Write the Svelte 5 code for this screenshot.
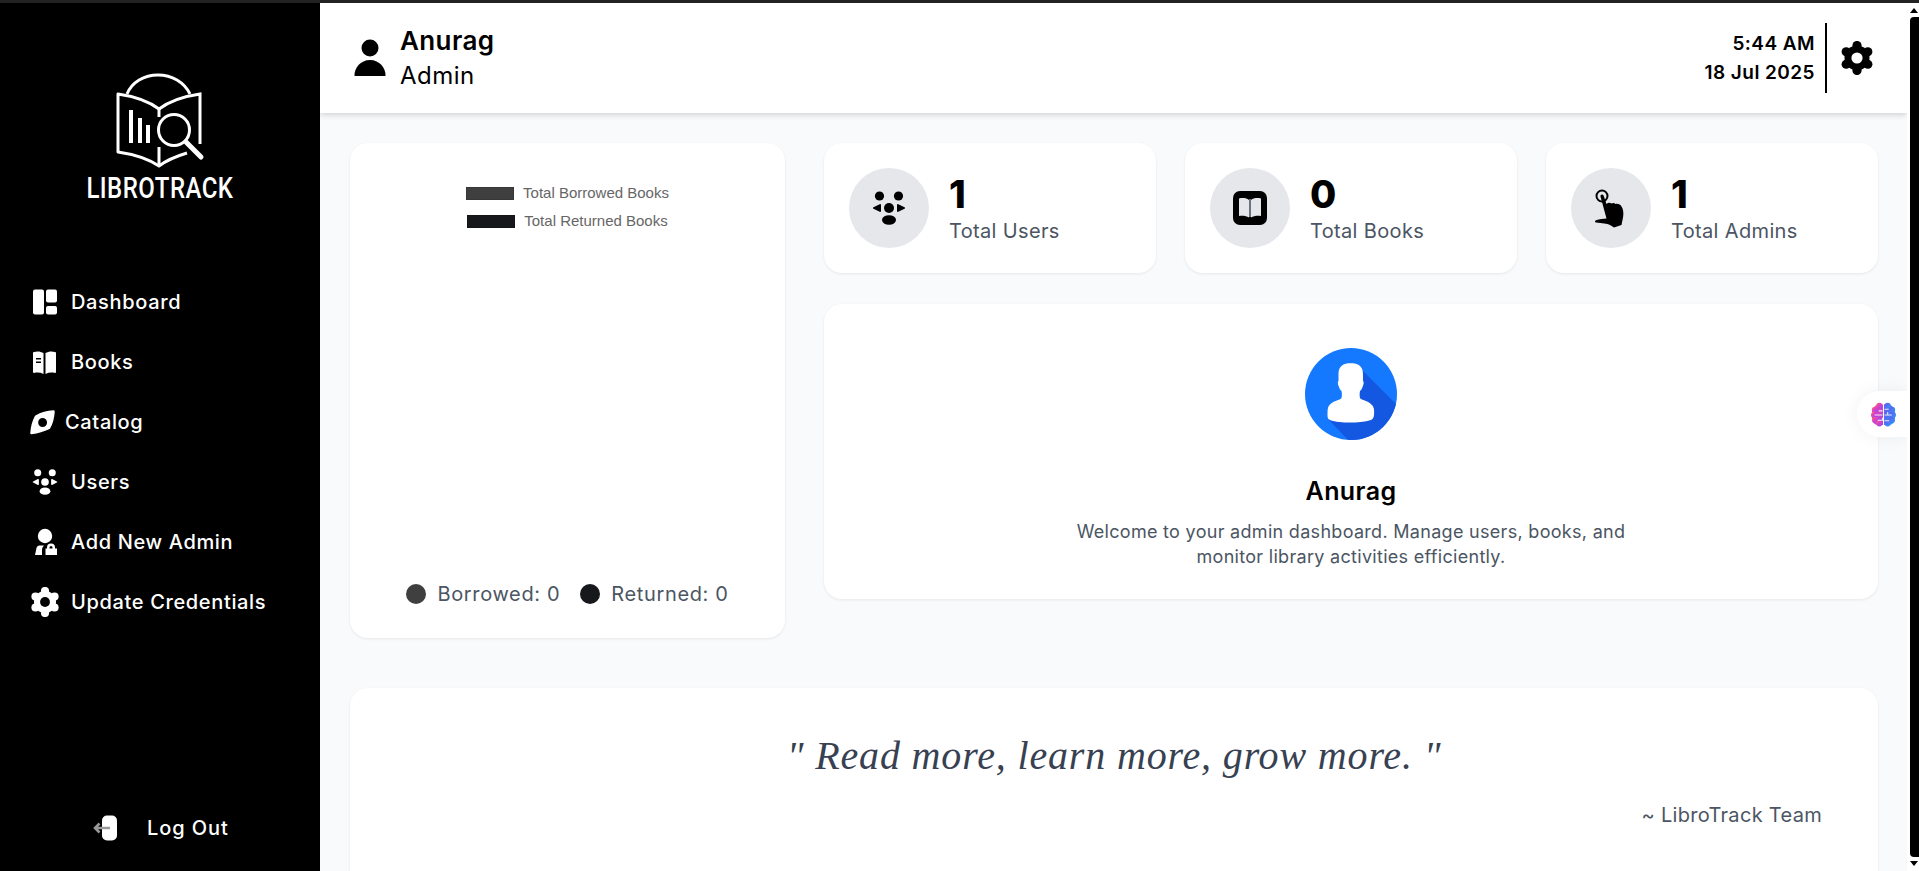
<script lang="ts">
	const navItems = [
		{ label: 'Dashboard', icon: 'dashboard' },
		{ label: 'Books', icon: 'books' },
		{ label: 'Catalog', icon: 'catalog' },
		{ label: 'Users', icon: 'users' },
		{ label: 'Add New Admin', icon: 'admin' },
		{ label: 'Update Credentials', icon: 'gear' }
	];

	const stats = [
		{ value: 1, label: 'Total Users', icon: 'users' },
		{ value: 0, label: 'Total Books', icon: 'book' },
		{ value: 1, label: 'Total Admins', icon: 'hand' }
	];

	const lobes = [0, 60, 120, 180, 240, 300];
</script>

{#snippet gear(size: number, hole: string)}
	<svg width={size} height={size} viewBox="0 0 34 34" fill="currentColor">
		{#each lobes as a}
			<circle cx={17 + 12.5 * Math.cos(((a + 30) * Math.PI) / 180)} cy={17 + 12.5 * Math.sin(((a + 30) * Math.PI) / 180)} r="4.6" />
		{/each}
		<circle cx="17" cy="17" r="12.5" />
		<circle cx="17" cy="17" r="5.6" fill={hole} />
	</svg>
{/snippet}

{#snippet people(size: number)}
	<svg width={size} height={size} viewBox="0 0 34 34" fill="currentColor">
		<circle cx="7.500" cy="5" r="4.600" />
		<circle cx="26.500" cy="5" r="4.600" />
		<circle cx="17" cy="17" r="5" />
		<path d="M9 14v6c0 .8-.6 1.100-1.300.8L1.500 17.800c-.7-.4-.7-1.200 0-1.600l6.200-3c.7-.3 1.300 0 1.300.8zM25 14v6c0 .8.6 1.100 1.300.8l6.200-3c.7-.4.7-1.200 0-1.600l-6.200-3c-.7-.3-1.300 0-1.300.8z" />
		<ellipse cx="17" cy="29" rx="7" ry="4.800" />
	</svg>
{/snippet}

{#snippet navIcon(name: string)}
	{#if name === 'dashboard'}
		<svg width="30" height="30" viewBox="0 0 30 30" fill="currentColor">
			<rect x="3" y="2.500" width="11" height="25" rx="2" />
			<rect x="16" y="2.500" width="11" height="13" rx="2" />
			<rect x="16" y="19" width="11" height="8.500" rx="2" />
		</svg>
	{:else if name === 'books'}
		<svg width="30" height="30" viewBox="0 0 30 30" fill="currentColor">
			<path d="M4 5c3-1 6.500-.8 9.500 1v21c-3-1.500-6-1.800-9.500-1a1 1 0 0 1-1-1V6a1 1 0 0 1 1-1z" />
			<path d="M15.500 6c3-1.800 6.500-2 9.500-1a1 1 0 0 1 1 1v19a1 1 0 0 1-1 1c-3.500-.8-6.500-.5-9.500 1z" />
			<rect x="6" y="11" width="5" height="1.500" fill="#000" />
			<rect x="6" y="14.500" width="5" height="1.500" fill="#000" />
		</svg>
	{:else if name === 'catalog'}
		<svg class="narrow" width="25" height="30" viewBox="0 0 25 30" fill="currentColor">
			<path fill-rule="evenodd" stroke="currentColor" stroke-width="2.500" stroke-linejoin="round" d="M6 9.500Q14 5 23.500 4.500 23 14 19 21 11 25 1.500 26 2 17 6 9.500zM12.600 9.800a5.700 5.700 0 1 0 0 11.400 5.700 5.700 0 0 0 0-11.400z" />
		</svg>
	{:else if name === 'users'}
		<span class="icon-box">{@render people(26)}</span>
	{:else if name === 'admin'}
		<svg width="30" height="30" viewBox="0 0 30 30" fill="currentColor">
			<circle cx="15" cy="9" r="7.200" />
			<path d="M5 28l1.500-7c.5-2 2-2.500 4-2.500h3.500c-1.500 1.500-2 3-2 5V28z" />
			<path fill-rule="evenodd" d="M15.500 28v-6.500h1.500v-1a4 4 0 0 1 8 0v1h2V28zM19.500 20.500v1h3v-1a1.500 1.500 0 0 0-3 0z" />
		</svg>
	{:else}
		{@render gear(30, '#000')}
	{/if}
{/snippet}

{#snippet statIcon(name: string)}
	{#if name === 'users'}
		{@render people(34)}
	{:else if name === 'book'}
		<svg width="34" height="34" viewBox="0 0 34 34">
			<rect x="0" y="0" width="34" height="34" rx="7" fill="#000" />
			<path d="M6 7.500c4-.8 7.500-.5 10 1.500v17.500c-2.500-1.500-6-2-10-1.500zM28 7.500c-4-.8-7.500-.5-10 1.500v17.500c2.500-1.500 6-2 10-1.500z" fill="#e5e7eb" />
			<rect x="16" y="8" width="2" height="18" fill="#6b7280" />
		</svg>
	{:else}
		<svg width="34" height="41" viewBox="0 0 34 41" fill="currentColor">
			<circle cx="8" cy="8" r="5.500" fill="none" stroke="currentColor" stroke-width="2" />
			<path d="M6.500 8.500c-.5-2 2.300-3 3.100-1L12.500 16c1.500-1.500 3.500-1.500 5-.5 1.500-1 3-.5 4 .5 2.500-.5 5 .5 6 2.500 2 3 2.500 8 1 13.500l-1 5-7.500 2.500-4-2.500c-3-1.500-8-1.500-14-2.500-1.300-.3-1.300-1.800 0-2.300 3.500-1.200 7-1.400 10.500-1.700z" />
		</svg>
	{/if}
{/snippet}

<div class="window">
	<div class="chrome"></div>
	<div class="shell">
		<aside class="sidebar">
			<div class="brand">
				<svg width="90" height="96" viewBox="0 0 90 96" fill="none" stroke="#fff" stroke-width="3">
					<path d="M12 21C17 9 29 2 43 2s26 7 32 19" />
					<path d="M44 36C32 27 17 23 3 21v58c14 2 29 6 41 14 8-6 18-10 28-13" stroke-linejoin="round" />
					<path d="M44 36c12-9 27-13 41-15v50" />
					<path d="M44 36v8M44 74v19" />
					<circle cx="59" cy="57" r="15.500" />
					<path d="M71 69l15 15" stroke-width="5" stroke-linecap="round" />
					<path d="M16 37v33M25 45v25M33 52v18" stroke-width="4" />
				</svg>
				<span class="wordmark">LIBROTRACK</span>
			</div>
			<nav class="nav">
				{#each navItems as item}
					<div class="nav-item" class:tight={item.icon === 'catalog'}>
						{@render navIcon(item.icon)}
						<span>{item.label}</span>
					</div>
				{/each}
			</nav>
			<div class="logout">
				<svg width="26" height="26" viewBox="0 0 26 26">
					<rect x="10" y="0.500" width="15" height="25" rx="5" fill="#fff" />
					<path d="M18 13H3M7.500 8.500L3 13l4.500 4.500" fill="none" stroke="#999" stroke-width="2.500" />
				</svg>
				<span>Log Out</span>
			</div>
		</aside>

		<main class="main">
			<header class="topbar">
				<div class="who">
					<svg width="36" height="38" viewBox="0 0 36 38" fill="#000">
						<circle cx="18" cy="9" r="8.500" />
						<path d="M2.500 37c-.5-8 6-16 15.500-16s16 8 15.500 16z" />
					</svg>
					<div>
						<div class="who-name">Anurag</div>
						<div class="who-role">Admin</div>
					</div>
				</div>
				<div class="clock">
					<div class="clock-text">
						<div>5:44 AM</div>
						<div>18 Jul 2025</div>
					</div>
					<div class="divider"></div>
					{@render gear(34, '#fff')}
				</div>
			</header>

			<div class="content">
				<div class="top-grid">
					<section class="card chart-card">
						<div class="chart-legend">
							<div class="legend-row"><i class="swatch borrowed"></i><span>Total Borrowed Books</span></div>
							<div class="legend-row"><i class="swatch returned"></i><span>Total Returned Books</span></div>
						</div>
						<div class="counts">
							<i class="dot borrowed"></i><span>Borrowed: 0</span>
							<i class="dot returned"></i><span>Returned: 0</span>
						</div>
					</section>

					<div class="right-col">
						<div class="stats">
							{#each stats as s}
								<div class="card stat">
									<div class="circle">{@render statIcon(s.icon)}</div>
									<div class="stat-text">
										<div class="stat-value">{s.value}</div>
										<div class="stat-label">{s.label}</div>
									</div>
								</div>
							{/each}
						</div>
						<section class="card welcome">
							<svg width="92" height="92" viewBox="0 0 92 92">
								<defs>
									<clipPath id="avatar-clip"><circle cx="46" cy="46" r="46" /></clipPath>
								</defs>
								<circle cx="46" cy="46" r="46" fill="#1479ff" />
								<polygon points="55,20 95,60 95,95 46,95 24,72" fill="#1457e0" clip-path="url(#avatar-clip)" />
								<path d="M45.500 15c8 0 12.500 3.500 12.500 11v7c1 .5 1 3-.5 6-.5 2-1.500 3-2.500 4-.5 2-.5 5 0 7 1 2 9 3 12 7 2 2 2.500 5 2 10-.5 3-1 4-3 5-6 2-14 2.500-21 2.500s-15-.5-20-2.500c-2-1-2.500-2-2.500-5 0-5 0-8 2-10 3-4 11-5 12-7 .5-2 .5-5 0-7-1-1-2-2-2.500-4-1.500-3-1.500-5.500-.5-6v-7c0-7.500 4.500-11 12.500-11z" fill="#fff" />
							</svg>
							<h2>Anurag</h2>
							<p>Welcome to your admin dashboard. Manage users, books, and<br />monitor library activities efficiently.</p>
						</section>
					</div>
				</div>

				<section class="card quote">
					<blockquote>" Read more, learn more, grow more. "</blockquote>
					<div class="signature">~ LibroTrack Team</div>
				</section>
			</div>

			<div class="ai-tab">
				<svg width="25" height="25" viewBox="0 0 24 24">
					<defs>
						<linearGradient id="brain-left" x1="0" y1="0" x2="1" y2="1">
							<stop offset="0" stop-color="#f9902a" />
							<stop offset="0.35" stop-color="#e83fc0" />
							<stop offset="1" stop-color="#8a4fe8" />
						</linearGradient>
						<linearGradient id="brain-right" x1="0" y1="0" x2="1" y2="1">
							<stop offset="0" stop-color="#6a55e8" />
							<stop offset="1" stop-color="#2a9bff" />
						</linearGradient>
					</defs>
					<g fill="url(#brain-left)">
						<path d="M11.500 2.500v19.500H6c-2 0-3.500-1.500-3.500-3.500L1 16V8l2-3c1-2 5-4 8.500-2.500z" />
						<circle cx="8" cy="3.800" r="3" />
						<circle cx="3.800" cy="7.500" r="3" />
						<circle cx="3" cy="12.500" r="3" />
						<circle cx="4" cy="17.500" r="3" />
						<circle cx="8" cy="20.500" r="3" />
					</g>
					<g fill="url(#brain-right)">
						<path d="M12.500 2.500v19.500H18c2 0 3.500-1.500 3.500-3.500L23 16V8l-2-3c-1-2-5-4-8.500-2.500z" />
						<circle cx="16" cy="3.800" r="3" />
						<circle cx="20.200" cy="7.500" r="3" />
						<circle cx="21" cy="12.500" r="3" />
						<circle cx="20" cy="17.500" r="3" />
						<circle cx="16" cy="20.500" r="3" />
					</g>
					<path d="M11 8.500H7.500M3.500 12.500H11M6.500 17.500H11V15M13 7h4M13 12.500h7M16 12.500V9.500M13 18h4.500" fill="none" stroke="#fff" stroke-width="1" opacity="0.85" />
				</svg>
			</div>
		</main>

		<div class="scroll-rail">
			<i class="arrow up"></i>
			<div class="thumb"></div>
			<i class="arrow down"></i>
		</div>
	</div>
</div>

<style>
	:global(body) {
		margin: 0;
		overflow: hidden;
	}

	.window {
		display: flex;
		flex-direction: column;
		height: 871px;
		overflow: hidden;
		font-family: Inter, 'Noto Sans', sans-serif;
		color: #000;
	}

	.chrome {
		height: 3px;
		background: #232323;
		flex: none;
	}

	.shell {
		display: flex;
		flex: 1;
		min-height: 0;
	}

	/* sidebar */
	.sidebar {
		width: 320px;
		flex: none;
		background: #000;
		color: #fff;
		display: flex;
		flex-direction: column;
	}

	.brand {
		display: flex;
		flex-direction: column;
		align-items: center;
		padding-top: 70px;
		gap: 6px;
	}

	.wordmark {
		font-family: Roboto, sans-serif;
		font-weight: 500;
		font-size: 30px;
		line-height: 26px;
		letter-spacing: 0.6px;
		transform: scaleX(0.8);
		white-space: nowrap;
	}

	.nav {
		display: flex;
		flex-direction: column;
		gap: 30px;
		margin-top: 86px;
		padding-left: 30px;
	}

	.nav-item {
		display: flex;
		align-items: center;
		gap: 11px;
		height: 30px;
		font-size: 20px;
		font-weight: 500;
		letter-spacing: 0.65px;
	}

	.nav-item.tight {
		gap: 10px;
	}

	.icon-box {
		width: 30px;
		height: 30px;
		display: flex;
		align-items: center;
		justify-content: center;
	}

	.logout {
		margin-top: auto;
		margin-bottom: 30px;
		padding-left: 92px;
		display: flex;
		align-items: center;
		gap: 29px;
		font-size: 20px;
		font-weight: 500;
		letter-spacing: 0.9px;
	}

	/* main */
	.main {
		position: relative;
		flex: 1;
		min-width: 0;
		background: #f9fafb;
		overflow: hidden;
	}

	.topbar {
		height: 110px;
		background: #fff;
		box-shadow: 0 2px 6px rgba(0, 0, 0, 0.16);
		display: flex;
		align-items: center;
		justify-content: space-between;
		padding: 0 33px 0 32px;
	}

	.who {
		display: flex;
		align-items: center;
		gap: 12px;
	}

	.who-name {
		font-size: 26px;
		font-weight: 600;
		line-height: 34px;
		letter-spacing: 0.4px;
	}

	.who-role {
		font-size: 24px;
		font-weight: 400;
		line-height: 35px;
		letter-spacing: 0.5px;
	}

	.clock {
		display: flex;
		align-items: center;
		gap: 10px;
	}

	.clock-text {
		text-align: right;
		font-size: 19px;
		font-weight: 600;
		line-height: 29px;
		letter-spacing: 0.45px;
	}

	.divider {
		width: 2px;
		height: 70px;
		background: #000;
		margin-right: 3px;
	}

	.content {
		padding: 30px 29px 0 30px;
	}

	.top-grid {
		display: grid;
		grid-template-columns: 435px 1fr;
		column-gap: 39px;
		align-items: start;
	}

	.card {
		background: #fff;
		border-radius: 18px;
		box-shadow: 0 1px 3px rgba(0, 0, 0, 0.08);
	}

	.chart-card {
		height: 495px;
		box-sizing: border-box;
		display: flex;
		flex-direction: column;
		justify-content: space-between;
		align-items: center;
		padding: 40px 0 32px;
	}

	.chart-legend {
		display: flex;
		flex-direction: column;
		gap: 8px;
		font-family: 'Liberation Sans', Arial, sans-serif;
		font-size: 15px;
		color: #666;
		align-items: center;
	}

	.legend-row {
		display: flex;
		align-items: center;
		gap: 9px;
		line-height: 20px;
	}

	.swatch {
		width: 48px;
		height: 13px;
		border: 1px solid rgba(0, 0, 0, 0.12);
		box-sizing: border-box;
	}

	.borrowed {
		background: #3f3f3f;
	}

	.returned {
		background: #17181c;
	}

	.counts {
		display: flex;
		align-items: center;
		font-size: 20px;
		font-weight: 400;
		color: #4b5563;
		letter-spacing: 0.65px;
	}

	.dot {
		width: 20px;
		height: 20px;
		border-radius: 50%;
		margin-right: 11px;
	}

	.counts span:first-of-type {
		margin-right: 20px;
	}

	.right-col {
		display: flex;
		flex-direction: column;
		gap: 31px;
	}

	.stats {
		display: grid;
		grid-template-columns: repeat(3, 1fr);
		gap: 29px;
	}

	.stat {
		height: 130px;
		display: flex;
		align-items: center;
		gap: 20px;
		padding-left: 25px;
	}

	.stat-text {
		padding-top: 2px;
	}

	.circle {
		width: 80px;
		height: 80px;
		border-radius: 50%;
		background: #e5e7eb;
		display: flex;
		align-items: center;
		justify-content: center;
		flex: none;
	}

	.stat-value {
		font-size: 38px;
		font-weight: 800;
		line-height: 44px;
	}

	.stat-label {
		font-size: 20px;
		color: #4b5563;
		line-height: 30px;
		letter-spacing: 0.35px;
	}

	.welcome {
		height: 295px;
		box-sizing: border-box;
		padding-top: 44px;
		display: flex;
		flex-direction: column;
		align-items: center;
		text-align: center;
	}

	.welcome h2 {
		margin: 35px 0 0;
		font-size: 25px;
		font-weight: 600;
		line-height: 32px;
		letter-spacing: 0.4px;
	}

	.welcome p {
		margin: 12px 0 0;
		font-size: 18px;
		line-height: 25px;
		color: #4b5563;
		letter-spacing: 0.3px;
	}

	.quote {
		margin-top: 50px;
		height: 260px;
		padding: 46px 56px 0;
	}

	.quote blockquote {
		margin: 0;
		text-align: center;
		font-family: 'Liberation Serif', 'DejaVu Serif', serif;
		font-style: italic;
		font-size: 40px;
		line-height: 44px;
		color: #374151;
		letter-spacing: 0.85px;
	}

	.signature {
		margin-top: 23px;
		text-align: right;
		font-size: 20px;
		line-height: 28px;
		color: #4b5563;
		letter-spacing: 0.3px;
	}

	.ai-tab {
		position: absolute;
		right: 0;
		top: 388px;
		width: 50px;
		height: 46px;
		background: #fff;
		border-radius: 23px 0 0 23px;
		box-shadow: 0 0 18px rgba(0, 0, 0, 0.06);
		display: flex;
		align-items: center;
		justify-content: flex-start;
		padding-left: 14px;
		box-sizing: border-box;
	}

	/* scrollbar */
	.scroll-rail {
		width: 12px;
		flex: none;
		background: #fff;
		display: flex;
		flex-direction: column;
		align-items: flex-end;
	}

	.thumb {
		flex: 1;
		width: 9px;
		background: #000;
		border-radius: 4px 0 0 4px;
		margin: 4px 0;
	}

	.arrow {
		width: 0;
		height: 0;
		margin: 5px 1px 0 0;
		border-left: 4px solid transparent;
		border-right: 4px solid transparent;
		border-bottom: 5px solid #000;
	}

	.arrow.down {
		margin: 0 1px 5px 0;
		border-bottom: none;
		border-top: 5px solid #000;
	}
</style>
